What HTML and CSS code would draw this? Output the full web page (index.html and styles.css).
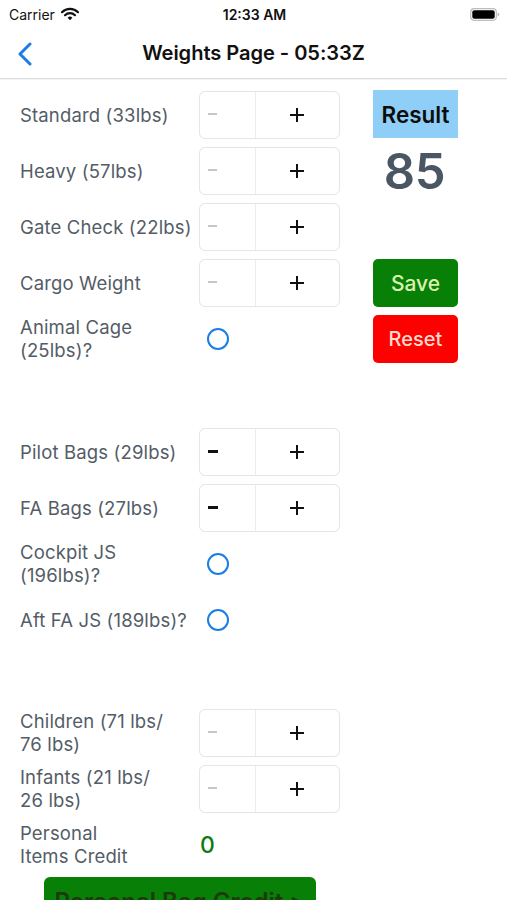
FILE: index.html
```html
<!DOCTYPE html>
<html lang="en">
<head>
<meta charset="utf-8">
<title>Weights Page</title>
<link rel="stylesheet" href="styles.css">
</head>
<body>
<div class="statusbar">
  <div class="sb-left">
    <span class="carrier">Carrier</span>
    <svg class="wifi" width="18" height="14" viewBox="0 0 18 14">
      <path d="M1 5.2 A11.5 11.5 0 0 1 17 5.2" fill="none" stroke="#111" stroke-width="2.2" stroke-linecap="round"/>
      <path d="M4 8.2 A7.2 7.2 0 0 1 14 8.2" fill="none" stroke="#111" stroke-width="2.2" stroke-linecap="round"/>
      <path d="M9 13.2 L6.6 10.8 A3.4 3.4 0 0 1 11.4 10.8 Z" fill="#111"/>
    </svg>
  </div>
  <div class="sb-time">12:33 AM</div>
  <div class="sb-right">
    <svg class="battery" width="30" height="13" viewBox="0 0 30 13">
      <rect x="0.7" y="0.7" width="25.6" height="11.6" rx="3.5" fill="none" stroke="#bdbdbd" stroke-width="1.2"/>
      <rect x="2.3" y="2.3" width="22.4" height="8.4" rx="2" fill="#000"/>
      <path d="M27.6 4.4 Q29.4 4.8 29.4 6.5 Q29.4 8.2 27.6 8.6 Z" fill="#bdbdbd"/>
    </svg>
  </div>
</div>

<div class="navbar">
  <svg class="back" width="16" height="24" viewBox="0 0 16 24">
    <path d="M13 2 L3 12 L13 22" fill="none" stroke="#1a7ee6" stroke-width="3" stroke-linecap="round" stroke-linejoin="round"/>
  </svg>
  <div class="title">Weights Page - 05:33Z</div>
  <div></div>
</div>

<main class="content">
  <section class="group">
    <div class="row">
      <div class="label">Standard (33lbs)</div>
      <div class="stepper"><div class="seg minus"><span class="bar dis"></span></div><div class="seg plus"><span class="cross"></span></div></div>
      <div class="side"><div class="result">Result</div></div>
    </div>
    <div class="row">
      <div class="label">Heavy (57lbs)</div>
      <div class="stepper"><div class="seg minus"><span class="bar dis"></span></div><div class="seg plus"><span class="cross"></span></div></div>
      <div class="side"><div class="total">85</div></div>
    </div>
    <div class="row">
      <div class="label">Gate Check (22lbs)</div>
      <div class="stepper"><div class="seg minus"><span class="bar dis"></span></div><div class="seg plus"><span class="cross"></span></div></div>
      <div class="side"></div>
    </div>
    <div class="row">
      <div class="label">Cargo Weight</div>
      <div class="stepper"><div class="seg minus"><span class="bar dis"></span></div><div class="seg plus"><span class="cross"></span></div></div>
      <div class="side"><div class="btn save">Save</div></div>
    </div>
    <div class="row">
      <div class="label">Animal Cage<br>(25lbs)?</div>
      <div class="ctrl"><span class="radio"></span></div>
      <div class="side"><div class="btn reset">Reset</div></div>
    </div>
  </section>

  <section class="group">
    <div class="row">
      <div class="label">Pilot Bags (29lbs)</div>
      <div class="stepper"><div class="seg minus"><span class="bar on"></span></div><div class="seg plus"><span class="cross"></span></div></div>
    </div>
    <div class="row">
      <div class="label">FA Bags (27lbs)</div>
      <div class="stepper"><div class="seg minus"><span class="bar on"></span></div><div class="seg plus"><span class="cross"></span></div></div>
    </div>
    <div class="row">
      <div class="label">Cockpit JS<br>(196lbs)?</div>
      <div class="ctrl"><span class="radio"></span></div>
    </div>
    <div class="row">
      <div class="label">Aft FA JS (189lbs)?</div>
      <div class="ctrl"><span class="radio"></span></div>
    </div>
  </section>

  <section class="group">
    <div class="row">
      <div class="label">Children (71 lbs/<br>76 lbs)</div>
      <div class="stepper"><div class="seg minus"><span class="bar dis"></span></div><div class="seg plus"><span class="cross"></span></div></div>
    </div>
    <div class="row">
      <div class="label">Infants (21 lbs/<br>26 lbs)</div>
      <div class="stepper"><div class="seg minus"><span class="bar dis"></span></div><div class="seg plus"><span class="cross"></span></div></div>
    </div>
    <div class="row">
      <div class="label">Personal<br>Items Credit</div>
      <div class="ctrl"><span class="credit">0</span></div>
    </div>
    <div class="bagbtn">Personal Bag Credit &gt;</div>
  </section>
</main>
</body>
</html>
```

FILE: styles.css
```css
* { box-sizing: border-box; }

html, body {
  margin: 0;
  padding: 0;
  background: #ffffff;
  width: 507px;
  height: 900px;
  overflow: hidden;
  font-family: Inter, "Liberation Sans", sans-serif;
  color: #000;
}

.statusbar {
  height: 28px;
  display: grid;
  grid-template-columns: 1fr auto 1fr;
  align-items: center;
  padding: 0 7px 0 9px;
}

.sb-left {
  display: flex;
  align-items: center;
  gap: 6px;
  font-size: 14px;
  color: #111;
}

.wifi { margin-top: -1px; }

.sb-time {
  font-size: 14px;
  font-weight: 600;
  color: #111;
}

.sb-right {
  display: flex;
  justify-content: flex-end;
}

.navbar {
  height: 51px;
  display: grid;
  grid-template-columns: 1fr auto 1fr;
  align-items: center;
  padding: 0 17px;
  border-bottom: 1px solid #dedede;
  box-shadow: 0 1px 0 #f2f2f2;
}

.back { display: block; margin-top: 1px; }

.title {
  font-size: 20.1px;
  font-weight: 600;
  color: #111;
  letter-spacing: -0.05px;
}

.content {
  padding: 12px 0 0 20px;
  display: flex;
  flex-direction: column;
  gap: 65px;
}

.group {
  display: flex;
  flex-direction: column;
  gap: 8px;
}

.row {
  height: 48px;
  display: flex;
  align-items: center;
}

.label {
  width: 179px;
  flex: none;
  font-size: 18.5px;
  line-height: 23px;
  letter-spacing: 0.15px;
  color: #545c66;
  white-space: nowrap;
}

.stepper {
  width: 141px;
  height: 48px;
  flex: none;
  display: flex;
  border: 1px solid #e6e6e6;
  border-radius: 6px;
  background: #fff;
  box-shadow: 0 0 1px rgba(0,0,0,0.04);
}

.seg {
  height: 100%;
  display: flex;
  align-items: center;
}

.seg.minus {
  width: 56px;
  padding-left: 8px;
  border-right: 1px solid #ececec;
}

.seg.plus {
  flex: 1;
  justify-content: center;
}

.bar {
  display: block;
  width: 9px;
  height: 2px;
  margin-top: -2px;
}

.bar.dis { background: #c6c6c6; }
.bar.on { background: #111; width: 10px; height: 3px; margin-top: -1px; }

.cross {
  position: relative;
  display: block;
  width: 14px;
  height: 14px;
  margin-left: -1px;
}

.cross::before,
.cross::after {
  content: "";
  position: absolute;
  background: #111;
}

.cross::before { left: 0; top: 6px; width: 14px; height: 2px; }
.cross::after { left: 6px; top: 0; width: 2px; height: 14px; }

.ctrl {
  width: 141px;
  flex: none;
  display: flex;
  align-items: center;
}

.radio {
  display: block;
  width: 22px;
  height: 22px;
  margin-left: 8px;
  border: 2.5px solid #1a7ee6;
  border-radius: 50%;
}

.credit {
  margin-left: 1px;
  font-size: 23px;
  font-weight: 500;
  color: #0a7d12;
}

.side {
  width: 85px;
  height: 48px;
  margin-left: 33px;
  flex: none;
}

.result {
  height: 48px;
  margin-top: -1px;
  background: #8fcff7;
  display: flex;
  align-items: center;
  justify-content: center;
  font-size: 22.5px;
  font-weight: 600;
  color: #0c0c0c;
}

.total {
  height: 48px;
  display: flex;
  align-items: center;
  justify-content: center;
  font-size: 49px;
  font-weight: 600;
  color: #4a5663;
  letter-spacing: -0.3px;
  padding-right: 2px;
}

.btn {
  height: 48px;
  border-radius: 5px;
  display: flex;
  align-items: center;
  justify-content: center;
  font-size: 21px;
  font-weight: 500;
}

.btn.save { background: #087f06; color: #d9f1ad; }
.btn.reset { background: #fd0000; color: #ffd9cf; font-size: 20px; }

.bagbtn {
  margin-left: 24px;
  width: 272px;
  height: 48px;
  border-radius: 6px;
  background: #087f06;
  color: #1c3a0c;
  font-size: 24px;
  font-weight: 600;
  display: flex;
  align-items: center;
  justify-content: center;
}
```
